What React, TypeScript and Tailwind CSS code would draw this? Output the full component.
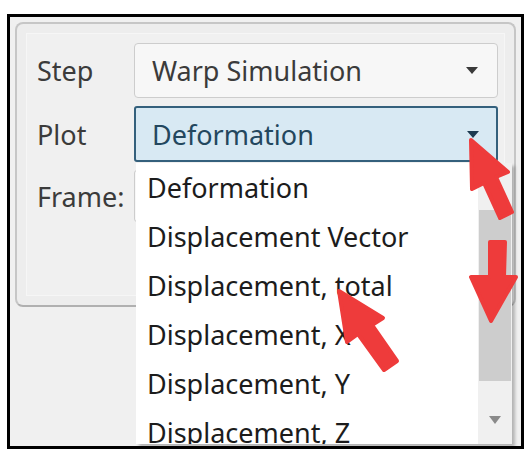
import React from "react";

const font = { fontFamily: '"Noto Sans", "Open Sans", sans-serif' };

function Tri({ color }: { color: string }) {
  return (
    <svg width="14" height="9" viewBox="0 0 14 9">
      <polygon points="1,1 13,1 7,8" fill={color} />
    </svg>
  );
}

const items = [
  "Deformation",
  "Displacement Vector",
  "Displacement, total",
  "Displacement, X",
  "Displacement, Y",
  "Displacement, Z",
];

export default function App() {
  return (
    <div className="relative w-[527px] h-[453px] bg-white pt-[14px] pl-[7px]" style={font}>
      <div className="relative w-[517px] h-[435px] border-[3px] border-black bg-[#f0f0f0] overflow-hidden">
        {/* group box */}
        <div className="ml-[5px] mt-[5px] w-[501px] h-[285px] rounded-[8px] border-2 border-[#c6c6c6] border-b-[#b0b0b0] bg-[#ededed] p-[9px]">
          <div className="w-full h-full border border-[#f6f6f6] bg-[#f0f0f0]">
            <div className="grid grid-cols-[97px_364px] gap-y-[8px] pl-[10px] pt-[9px] items-center">
              <div className="text-[27px] text-[#3b3b3b] leading-none">Step</div>
              <div className="h-[55px] rounded-[4px] border border-[#cdcdcd] bg-[#f7f7f7] flex items-center justify-between pl-[17px] pr-[18px]">
                <span className="text-[27px] text-[#3b3b3b] leading-none">Warp Simulation</span>
                <Tri color="#3a3a3a" />
              </div>
              <div className="text-[27px] text-[#3b3b3b] leading-none">Plot</div>
              <div className="h-[56px] rounded-[3px] border-2 border-[#34607c] bg-[#d8e9f3] flex items-center justify-between pl-[16px] pr-[16px]">
                <span className="text-[27px] text-[#23475e] leading-none">Deformation</span>
                <Tri color="#1d3a50" />
              </div>
              <div className="text-[27px] text-[#3b3b3b] leading-none">Frame:</div>
              <div className="h-[52px] rounded-[3px] border border-[#cdcdcd] bg-[#f7f7f7]" />
            </div>
          </div>
        </div>

        {/* dropdown popup */}
        <div className="absolute left-[126px] top-[146px] w-[376px] h-[281px] bg-white flex shadow-[3px_3px_3px_rgba(0,0,0,0.25)] overflow-hidden">
          <div className="flex-1 flex flex-col">
            {items.map((t) => (
              <div key={t} className="h-[49px] shrink-0 flex items-center pl-[11px] text-[27px] text-[#1c1c1c] leading-none">
                {t}
              </div>
            ))}
          </div>
          <div className="w-[34px] bg-[#f0f0f0] flex flex-col">
            <div className="h-[47px]" />
            <div className="h-[171px] mx-[1px] bg-[#cdcdcd]" />
            <div className="flex-1 flex items-end justify-center pb-[19px]">
              <svg width="14" height="10" viewBox="0 0 14 10">
                <polygon points="1,1 13,1 7,9" fill="#8a8a8a" />
              </svg>
            </div>
          </div>
        </div>
      </div>

      {/* annotation arrows */}
      <svg className="absolute left-0 top-0 pointer-events-none" width="527" height="453" viewBox="0 0 527 453">
        <g fill="#ee3b3b" stroke="#ee3b3b" strokeWidth="4" strokeLinejoin="round">
          <polygon points="471,140 508,172 496,177 512,212 500,218 484,183 472,189" />
          <polygon points="490,242 505,242 504,277 516,277 491,321 471,277 490,277" />
          <polygon points="339,291 383,318 372,325 397,361 384,370 358,334 347,342" />
        </g>
      </svg>
    </div>
  );
}
